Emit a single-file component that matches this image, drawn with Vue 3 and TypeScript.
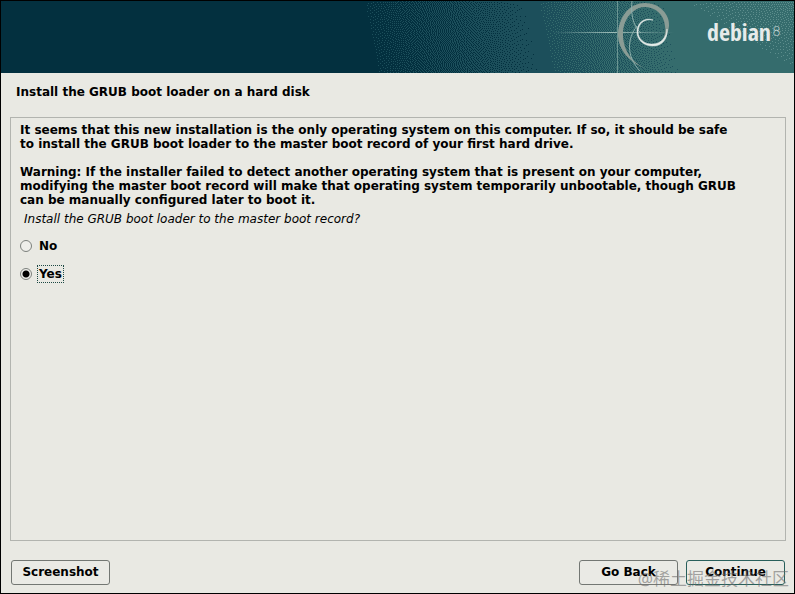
<script setup lang="ts">
import { ref } from 'vue'

const choice = ref<'no' | 'yes'>('yes')

const artWidth = 430
const artHeight = 72

// Brightness of the banner in palette steps: 0 navy, 1 slate, 2 teal, 3 mist.
function tone(x: number, y: number): number {
  const u = x - y * 0.2
  if (u < 0) return 0
  if (u < 160) return 0.1 + (u / 160) * 0.88
  if (u < 174) return 1
  const base = Math.min(2, 1.08 + (u - 174) / 140)
  const corner = x - 322 - y * 1.6
  return corner > 0 ? Math.min(2.3, base + 0.06 + corner / 500) : base
}

// Error-diffused dots, collected as one path per palette colour.
function dither(): string[] {
  const paths = ['', '', '']
  let carry = new Array<number>(artWidth + 2).fill(0)
  for (let y = 0; y < artHeight; y++) {
    const next = new Array<number>(artWidth + 2).fill(0)
    for (let x = 0; x < artWidth; x++) {
      const value = tone(x, y) + carry[x + 1]
      const level = Math.max(0, Math.min(3, Math.round(value)))
      const error = value - level
      carry[x + 2] += (error * 7) / 16
      next[x] += (error * 3) / 16
      next[x + 1] += (error * 5) / 16
      next[x + 2] += error / 16
      if (level > 0) paths[level - 1] += `M${x} ${y}h1v1h-1z`
    }
    carry = next
  }
  return paths
}

const [slateDots, tealDots, mistDots] = dither()
</script>

<template>
  <main class="installer">
    <header class="banner">
      <svg class="art" viewBox="0 0 430 72" width="430" height="72" role="img" aria-label="debian 8">
        <defs>
          <linearGradient id="ray" x1="0" x2="1">
            <stop offset="0" stop-color="#9dbcb8" stop-opacity="0" />
            <stop offset=".5" stop-color="#9dbcb8" />
            <stop offset="1" stop-color="#9dbcb8" stop-opacity="0" />
          </linearGradient>
        </defs>
        <g shape-rendering="crispEdges">
          <path :d="slateDots" fill="#1c4f5b" />
          <path :d="tealDots" fill="#356c6d" />
          <path :d="mistDots" fill="#5c8d8c" />
        </g>
        <rect x="188" y="31" width="122" height="1" fill="url(#ray)" />
        <rect x="253" y="0" width="1" height="72" fill="#6b9593" />
        <path d="M283 68C263 61 253 46 254 31C256 13 267 2 281 2C296 2 306 14 305 25C304 33 302 37 298 40C301 35 302 30 301 25C300 13 291 6 280 6C269 7 259 18 259 33C259 49 268 62 283 68Z" fill="#8a9c95" />
        <path d="M268 0C267 9 268 18 271 24C273 28 275 30 277 32M273 25C263 38 262 55 276 70" fill="none" stroke="#8db0ac" stroke-width="1" />
        <path d="M289 19C279 17 274 24 274 31C274 38 281 44 289 43C297 43 303 36 303 28C304 38 298 45 289 45C280 45 273 39 273 31C273 22 280 16 289 19Z" fill="#e4ebe8" stroke="#e4ebe8" stroke-width=".6" />
        <text class="brand" x="343" y="40">debian</text>
        <text class="version" x="408" y="35">8</text>
      </svg>
    </header>

    <h1 class="title">Install the GRUB boot loader on a hard disk</h1>

    <section class="panel">
      <p class="text">It seems that this new installation is the only operating system on this computer. If so, it should be safe to install the GRUB boot loader to the master boot record of your first hard drive.</p>
      <p class="text">Warning: If the installer failed to detect another operating system that is present on your computer, modifying the master boot record will make that operating system temporarily unbootable, though GRUB can be manually configured later to boot it.</p>
      <fieldset class="question">
        <legend class="prompt">Install the GRUB boot loader to the master boot record?</legend>
        <label class="option">
          <input v-model="choice" class="radio" type="radio" name="grub" value="no" />
          <span class="caption">No</span>
        </label>
        <label class="option">
          <input v-model="choice" class="radio" type="radio" name="grub" value="yes" />
          <span class="caption">Yes</span>
        </label>
      </fieldset>
    </section>

    <footer class="actions">
      <button class="button" type="button">Screenshot</button>
      <span class="spacer"></span>
      <button class="button" type="button">Go Back</button>
      <button class="button primary" type="button">Continue</button>
    </footer>
    <span class="watermark">@稀土掘金技术社区</span>
  </main>
</template>

<style>
body {
  margin: 0;
  background: #e9e9e3;
}
</style>

<style scoped>
.installer {
  position: relative;
  box-sizing: border-box;
  display: flex;
  flex-direction: column;
  min-height: 100vh;
  border: 1px solid #000;
  background: #e9e9e3;
  color: #000;
  font: bold 12px/14px "DejaVu Sans", sans-serif;
}
.banner {
  display: flex;
  justify-content: flex-end;
  background: #03303f;
  overflow: hidden;
}
.art {
  display: block;
  flex: none;
}
.brand {
  fill: #e6ebea;
  font: 400 24px "Liberation Sans Narrow", "Open Sans Condensed", "Roboto Condensed", Lato, sans-serif;
}
.version {
  fill: #c8d7d5;
  font: 200 14px "DejaVu Sans", sans-serif;
}
.title {
  margin: 0;
  padding: 12px 15px 18px;
  font: inherit;
}
.panel {
  flex: 1;
  margin: 0 8px 0 9px;
  padding: 5px 9px;
  border: 1px solid #b2b4af;
}
.text {
  max-width: 720px;
  margin: 0 0 14px;
}
.text + .text {
  margin-bottom: 5px;
}
.question {
  margin: 0;
  padding: 0;
  border: 0;
}
.prompt {
  margin-bottom: 6px;
  padding: 0 4px;
  font-weight: normal;
  font-style: italic;
}
.option {
  display: flex;
  align-items: center;
  width: max-content;
  height: 28px;
  gap: 5px;
}
.radio {
  appearance: none;
  box-sizing: border-box;
  width: 12px;
  height: 12px;
  margin: 0;
  border: 1px solid #7c807c;
  border-radius: 50%;
  background: #eeeeea;
}
.radio:checked {
  background: radial-gradient(circle, #000 0 3px, #eeeeea 4px);
}
.caption {
  padding: 1px;
  border: 1px dotted transparent;
}
.radio:checked + .caption {
  border-color: #1d4944;
}
.actions {
  display: flex;
  gap: 8px;
  padding: 19px 9px 8px 10px;
}
.spacer {
  flex: 1;
}
.button {
  box-sizing: border-box;
  width: 99px;
  height: 25px;
  padding: 0 0 2px;
  border: 1px solid #737773;
  border-radius: 3px;
  background: #eaeae5;
  color: #000;
  font: inherit;
}
.primary {
  border-color: #285f5b;
}
.watermark {
  position: absolute;
  right: 5px;
  bottom: 2px;
  color: rgba(110, 110, 110, 0.6);
  font: 17px/24px "Noto Sans", "Noto Sans CJK SC", sans-serif;
  pointer-events: none;
}
</style>
